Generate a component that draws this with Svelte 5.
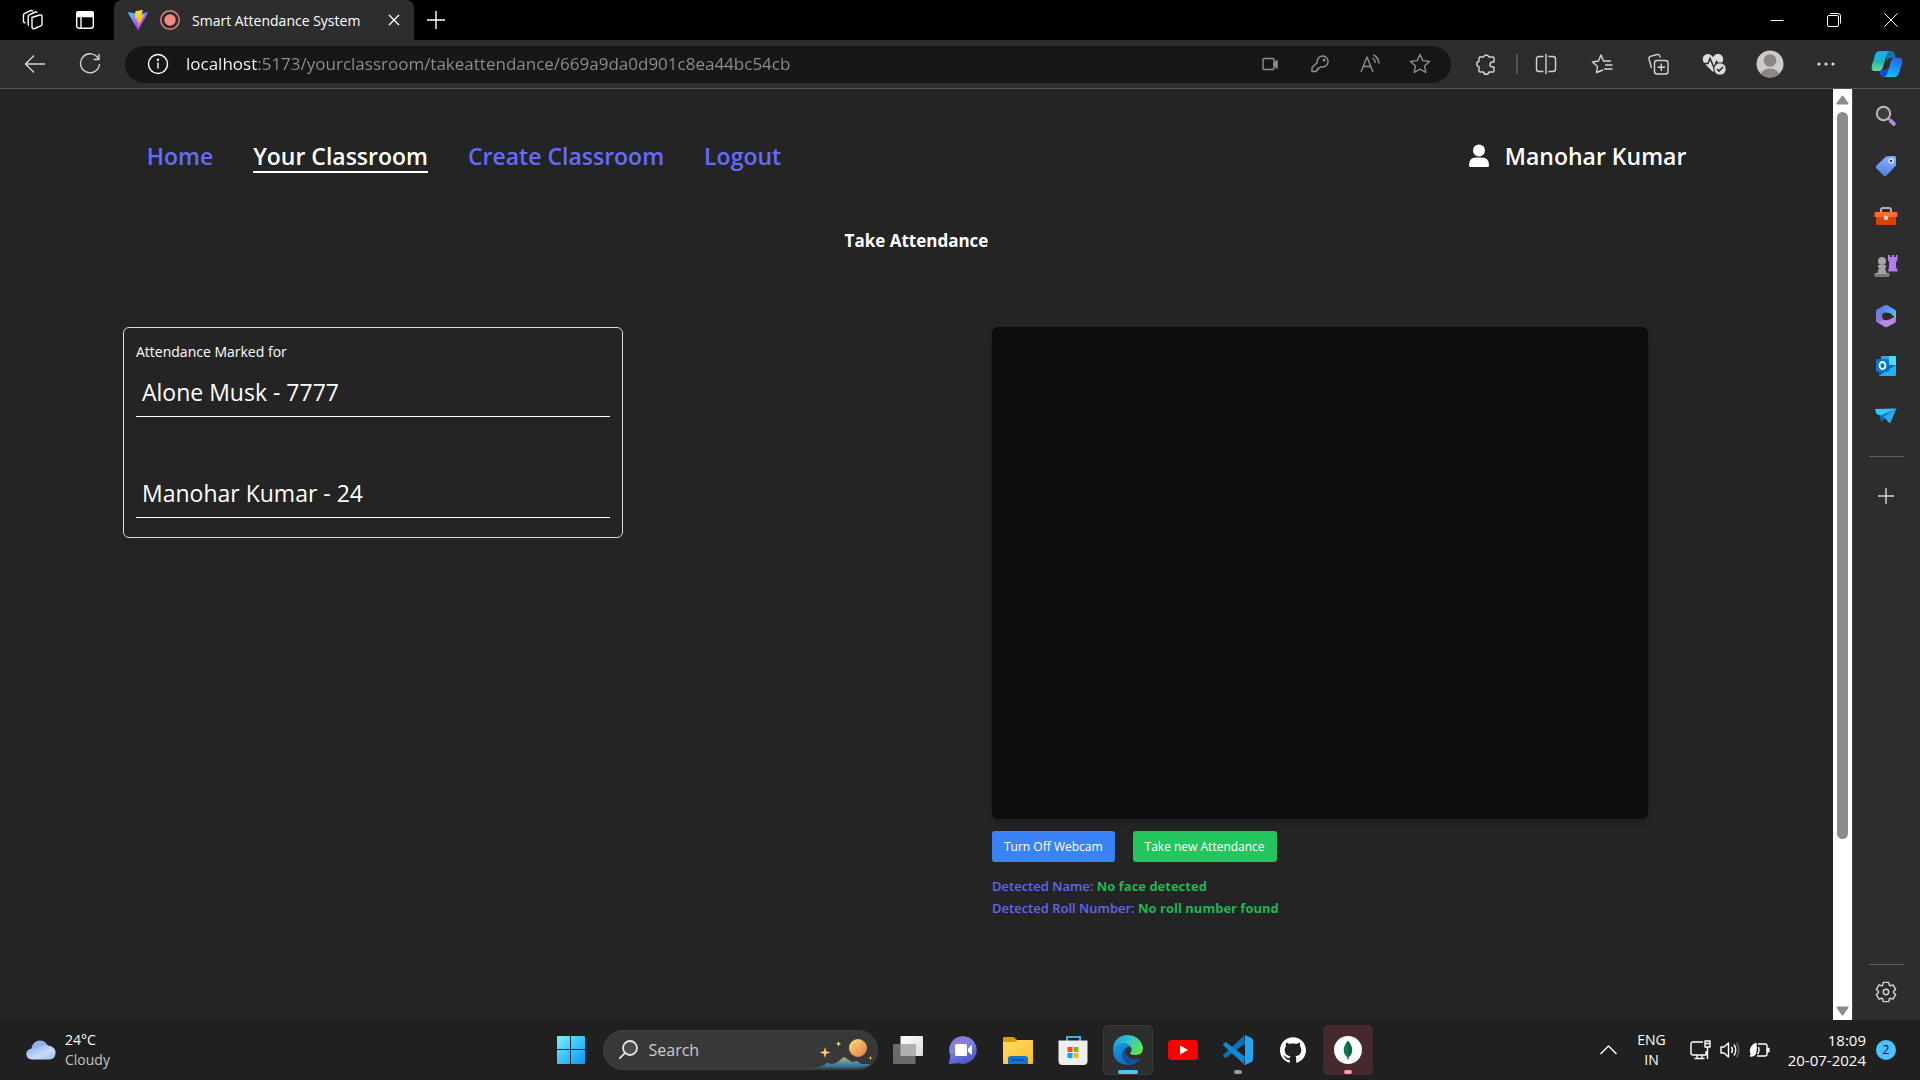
<script>
  const links = [
    { label: 'Home', active: false },
    { label: 'Your Classroom', active: true },
    { label: 'Create Classroom', active: false },
    { label: 'Logout', active: false }
  ];
  const marked = ['Alone Musk - 7777', 'Manohar Kumar - 24'];
  let url = $state('localhost:5173/yourclassroom/takeattendance/669a9da0d901c8ea44bc54cb');

  const gear = Array.from({ length: 6 }, (_, i) => i * 60 - 90)
    .flatMap((a) => [[a - 25, 7.6], [a - 16, 10], [a + 16, 10], [a + 25, 7.6]])
    .map(([a, r]) => {
      const t = (a * Math.PI) / 180;
      return `${(11 + r * Math.cos(t)).toFixed(2)},${(11 + r * Math.sin(t)).toFixed(2)}`;
    })
    .join(' ');
</script>

<div class="screen">
  <header class="tabs">
    <button class="lead" aria-label="Workspaces">
      <svg width="24" height="24" viewBox="0 0 24 24" class="line"><path d="M11 9.5 18.5 7q2-.6 2.500 1.200v7.800q0 1.300-1.300 1.800l-6 2.700q-2.200.7-2.700-1.200zM8 17.500q-.8-.3-.8-1.500V8.200q0-1 1-1.400l6-2.800q1.500-.5 2.200.6M4.500 15q-2-.4-2-1.600V7q0-1.200 1.200-1.700L9.500 2.700q1.500-.5 2.300.5" /></svg>
    </button>
    <button class="lead" aria-label="Tab actions">
      <svg width="20" height="20" viewBox="0 0 20 20" class="line"><rect x="1.700" y="1.700" width="16.600" height="16.600" rx="2.500" /><path d="M2 2h16v4.500H2z" fill="currentColor" /><path d="M6 6v12" /></svg>
    </button>
    <div class="tab">
      <svg width="20" height="20" viewBox="0 0 256 257">
        <defs>
          <linearGradient id="viteA" x1="0" x2=".6" y1="0" y2=".8"><stop offset="0" stop-color="#41d1ff" /><stop offset="1" stop-color="#bd34fe" /></linearGradient>
          <linearGradient id="viteB" x1=".4" x2=".5" y1="0" y2="1"><stop offset="0" stop-color="#ffea83" /><stop offset=".1" stop-color="#ffdd35" /><stop offset="1" stop-color="#ffa800" /></linearGradient>
        </defs>
        <path fill="url(#viteA)" d="M255.153 37.938L134.897 252.976c-2.483 4.440-8.862 4.466-11.382.048L.875 37.958c-2.746-4.814 1.371-10.646 6.827-9.670l120.385 21.517a6.537 6.537 0 0 0 2.322-.004l117.867-21.483c5.438-.991 9.574 4.796 6.877 9.620Z" />
        <path fill="url(#viteB)" d="M185.432.063L96.440 17.501a3.268 3.268 0 0 0-2.634 3.014l-5.474 92.456a3.268 3.268 0 0 0 3.997 3.378l24.777-5.718c2.318-.535 4.413 1.507 3.936 3.838l-7.361 36.047c-.495 2.426 1.782 4.500 4.151 3.780l15.304-4.649c2.372-.720 4.652 1.360 4.150 3.788l-11.698 56.621c-.732 3.542 3.979 5.473 5.943 2.437l1.313-2.028l72.516-144.720c1.215-2.423-.880-5.186-3.540-4.672l-25.505 4.922c-2.396.462-4.435-1.770-3.759-4.114l16.646-57.705c.677-2.350-1.370-4.583-3.769-4.113Z" />
      </svg>
      <svg width="20" height="20" viewBox="0 0 20 20"><circle cx="10" cy="10" r="9.300" fill="none" stroke="#e8857d" stroke-width="1.400" /><circle cx="10" cy="10" r="5.700" fill="#f28b82" /></svg>
      <span class="tab-title">Smart Attendance System</span>
      <button aria-label="Close tab"><svg width="12" height="12" viewBox="0 0 12 12" class="line"><path d="m1 1 10 10M11 1 1 11" /></svg></button>
    </div>
    <button class="new-tab" aria-label="New tab"><svg width="18" height="18" viewBox="0 0 18 18" class="line"><path d="M9 0v18M0 9h18" /></svg></button>
    <div class="window">
      <button aria-label="Minimise"><svg width="14" height="14" viewBox="0 0 14 14" class="thin"><path d="M.5 7.500h13" /></svg></button>
      <button aria-label="Restore"><svg width="14" height="14" viewBox="0 0 14 14" class="thin"><rect x=".5" y="2.500" width="11" height="11" rx="1.500" /><path d="M3 .5h8q2.500 0 2.500 2.500v7.500" /></svg></button>
      <button aria-label="Close"><svg width="14" height="14" viewBox="0 0 14 14" class="thin"><path d="m.5.5 13 13M13.500.5l-13 13" /></svg></button>
    </div>
  </header>

  <div class="toolbar">
    <button class="nav-button" aria-label="Back"><svg width="22" height="20" viewBox="0 0 22 20" class="line soft"><path d="M21 10H1.500M10 1.500 1.500 10l8.500 8.500" /></svg></button>
    <button class="nav-button" aria-label="Refresh"><svg width="22" height="22" viewBox="0 0 22 22" class="line soft"><path d="M19.500 6A9.500 9.500 0 1 0 20.500 11M20 1v5.500h-5.500" /></svg></button>
    <div class="address">
      <button class="info" aria-label="Site information"><svg width="22" height="22" viewBox="0 0 22 22" class="line"><circle cx="11" cy="11" r="9.500" /><path d="M11 9.500v6" /><circle cx="11" cy="6.800" r=".5" fill="currentColor" /></svg></button>
      <input type="text" aria-label="Address" bind:value={url} />
      <button class="action" aria-label="Camera"><svg width="16" height="14" viewBox="0 0 16 14" class="line"><rect x="1" y="1.500" width="11" height="11" rx="1" /><path d="M12 6.500 15 3.500v7.500L12 8z" fill="currentColor" /></svg></button>
      <button class="action" aria-label="Passwords"><svg width="20" height="20" viewBox="0 0 20 20" class="line"><path d="M12.500 2a5.500 5.500 0 1 1-1.700 10.700L9.500 14H8v2H6.500v1.500H2v-3.700l5.300-5.300A5.500 5.500 0 0 1 12.500 2z" /><circle cx="14" cy="6" r=".8" fill="currentColor" /></svg></button>
      <button class="action" aria-label="Read aloud"><svg width="20" height="20" viewBox="0 0 20 20" class="line"><path d="M1 18 7 3l6 15M3.300 12.500h7.400M12.500 4q2.500 1.500 2.700 5M13.500 1q5 2.500 5.500 8.500" /></svg></button>
      <button class="action" aria-label="Add to favourites"><svg width="22" height="22" viewBox="0 0 22 22" class="line"><path d="m11 1.500 2.800 6.100 6.700.8-5 4.500 1.400 6.600-5.900-3.300-5.900 3.300 1.400-6.600-5-4.500 6.700-.8z" /></svg></button>
    </div>
    <button class="extensions" aria-label="Extensions"><svg width="22" height="22" viewBox="0 0 22 22" class="line soft"><path d="M5 4h3.500a2.800 2.800 0 0 1 5.400 0H18q1 0 1 1v4h-1.500a2.500 2.500 0 0 0 0 5H19v4q0 1-1 1h-4a2.800 2.800 0 0 1-5.500 0H5q-1 0-1-1v-4.300a2.800 2.800 0 0 1 0-5.500V5q0-1 1-1z" /></svg></button>
    <span class="divider"></span>
    <button aria-label="Split screen"><svg width="22" height="20" viewBox="0 0 22 20" class="line soft"><path d="M8.500 2.500H4Q1.500 2.500 1.500 5v10Q1.500 17.500 4 17.500h4.500M13.500 2.500H18q2.500 0 2.500 2.500v10q0 2.500-2.500 2.500h-4.500M11 0v20" /></svg></button>
    <button aria-label="Favourites"><svg width="22" height="22" viewBox="0 0 22 22" class="line soft"><path d="M12 17 5.500 19.500 6.500 13.500 1.500 9l6-1L10 2l2.500 6h7.500M14 12h7.500M13 16h8.500" /></svg></button>
    <button aria-label="Collections"><svg width="22" height="22" viewBox="0 0 22 22" class="line soft"><rect x="7.500" y="7.500" width="13.500" height="13.500" rx="2.500" /><path d="M14.250 10.500v7.500M10.500 14.250h7.500M4.500 15 2 6q-.5-2 1.500-2.600L10 1.500q2.200-.5 2.800 1.500l.5 1.500" /></svg></button>
    <button aria-label="Browser essentials">
      <svg width="24" height="22" viewBox="0 0 24 22"><path fill="#dcdcdc" d="M11 4Q14-.2 18 1.200 22.500 3.500 20.500 9L11 19 2 10Q-1 4 3.500 1.500 8-.2 11 4z" /><path d="M0 10.500h6l2-5 4 9 2.500-6 2 3" fill="none" stroke="#2d2d2d" stroke-width="1.500" /><circle cx="18" cy="16" r="6.200" fill="#dcdcdc" stroke="#2d2d2d" /><path d="m15 16 2 2 4-4" fill="none" stroke="#2d2d2d" stroke-width="1.600" /></svg>
    </button>
    <button aria-label="Profile">
      <svg width="28" height="28" viewBox="0 0 28 28"><clipPath id="face"><circle cx="14" cy="14" r="13.500" /></clipPath><g clip-path="url(#face)"><path fill="#cecac6" d="M0 0h28v28H0z" /><circle cx="14" cy="10.500" r="6.300" fill="#8b8683" /><ellipse cx="14" cy="26" rx="9.500" ry="7.500" fill="#8b8683" /></g></svg>
    </button>
    <button aria-label="Settings and more"><svg width="18" height="6" viewBox="0 0 18 6" fill="#dcdcdc"><circle cx="2" cy="3" r="1.600" /><circle cx="9" cy="3" r="1.600" /><circle cx="16" cy="3" r="1.600" /></svg></button>
    <button class="copilot" aria-label="Copilot">
      <svg width="32" height="28" viewBox="0 0 32 28">
        <defs>
          <linearGradient id="copA" x1=".3" x2=".2" y1="0" y2="1"><stop offset="0" stop-color="#0fafff" /><stop offset=".5" stop-color="#1eb6b9" /><stop offset="1" stop-color="#6fdc8c" /></linearGradient>
          <linearGradient id="copB" x1=".6" x2=".3" y1="0" y2="1"><stop offset="0" stop-color="#2764e7" /><stop offset="1" stop-color="#14c1fa" /></linearGradient>
        </defs>
        <path fill="#13739f" d="M14 1h6q3 0 3.800 3l1.200 4h-5q-3 0-4 3z" />
        <path fill="#1b49d4" d="M18 27h-5q-3 0-4-3l-1-4h5q3 0 4-3z" />
        <path fill="url(#copA)" d="M9 1h10q-2.500.5-3.300 3.500L12 17q-1 4-4.500 4H4Q-.5 21 1 15L4 5Q5.200 1 9 1z" />
        <path fill="url(#copB)" d="M23 27H13q2.500-.5 3.300-3.500L20 11q1-3.500 4.500-3.500H28q4.500 0 3 6L28 23q-1.200 4-5 4z" />
      </svg>
    </button>
  </div>

  <div class="body">
    <main class="page">
      <nav>
        {#each links as link}
          <a href="#top" class:active={link.active}>{link.label}</a>
        {/each}
        <span class="user">
          <svg width="20" height="24" viewBox="0 0 20 24" fill="#fff"><circle cx="10" cy="6.500" r="6" /><path d="M0 21.500Q0 13.500 7 13.500h6q7 0 7 8 0 1.500-1.500 1.500h-17Q0 23 0 21.500z" /></svg>
          <span>Manohar Kumar</span>
        </span>
      </nav>
      <h1>Take Attendance</h1>
      <div class="content">
        <section class="card">
          <h2>Attendance Marked for</h2>
          <ul>
            {#each marked as entry}
              <li>{entry}</li>
            {/each}
          </ul>
        </section>
        <section class="camera">
          <div class="video" role="img" aria-label="Webcam feed"></div>
          <div class="buttons">
            <button class="off">Turn Off Webcam</button>
            <button class="take">Take new Attendance</button>
          </div>
          <p>Detected Name: <strong>No face detected</strong></p>
          <p>Detected Roll Number: <strong>No roll number found</strong></p>
        </section>
      </div>
    </main>

    <div class="scrollbar" aria-hidden="true">
      <svg width="13" height="10" viewBox="0 0 13 10"><path d="M6.500 1.500 11.500 8.500h-10z" fill="#8b8b8b" stroke="#8b8b8b" stroke-width="2" stroke-linejoin="round" /></svg>
      <div class="track"><div class="thumb"></div></div>
      <svg width="13" height="10" viewBox="0 0 13 10"><path d="M6.500 8.500 1.500 1.500h10z" fill="#8b8b8b" stroke="#8b8b8b" stroke-width="2" stroke-linejoin="round" /></svg>
    </div>

    <aside>
      <button aria-label="Search sidebar"><svg width="22" height="22" viewBox="0 0 22 22" fill="none"><path d="m13 13 3 3" stroke="#aaa" stroke-width="2" /><circle cx="8.500" cy="8.500" r="6.700" fill="#3d3d3d" stroke="#bdbab7" stroke-width="2" /><path d="m15.800 15.800 3 3" stroke="#b987ea" stroke-width="4" stroke-linecap="round" /></svg></button>
      <button aria-label="Shopping"><svg width="22" height="22" viewBox="0 0 22 22"><defs><linearGradient id="tag" x1=".5" x2=".3" y1="0" y2="1"><stop offset="0" stop-color="#82b1ff" /><stop offset="1" stop-color="#5580dc" /></linearGradient></defs><path fill="url(#tag)" d="m11 1.500 8-.5q2 0 2 2v7.500L11.500 20.500q-1.500 1-3 0L1.500 13.500q-1.500-1.500 0-3z" /><circle cx="16" cy="6" r="2" fill="#263d59" stroke="#dce8f5" stroke-width="1.500" /></svg></button>
      <button aria-label="Tools"><svg width="24" height="20" viewBox="0 0 24 20"><path d="M7 6V4q0-2 2-2h6q2 0 2 2v2" fill="none" stroke="#b4afab" stroke-width="2" /><path fill="#d94308" d="M2 8h20v10q0 1-1 1H3q-1 0-1-1z" /><path fill="#f86d2c" d="M2 6h20q1.500 0 1.500 1.500V10q0 1-1 1h-21q-1 0-1-1V7.500Q.5 6 2 6z" /><circle cx="12" cy="12" r="2.300" fill="#d3cdc9" /></svg></button>
      <button aria-label="Games"><svg width="24" height="24" viewBox="0 0 24 24"><path fill="#b87af0" d="M14 1h2v2h2V1h2v2h2V1h1.500v5L22 8v5l1.500 3v1.500H14l1-4.500V8l-1-2z" /><g fill="#a4a19f"><circle cx="8" cy="7" r="4" /><path d="M4 11h8v2l-1 1 1.500 5H15q1 1 0 4H1q-1-3 0-4h2.500L5 14l-1-1z" /></g><path fill="#7c7977" d="M1 20h14v3H1z" /></svg></button>
      <button aria-label="Microsoft 365"><svg width="22" height="24" viewBox="0 0 22 24"><defs><linearGradient id="msA" x1="0" x2="0" y1="0" y2="1"><stop offset="0" stop-color="#5279e8" /><stop offset="1" stop-color="#9c74d9" /></linearGradient><linearGradient id="msB" x1="0" x2="1" y1="0" y2="1"><stop offset="0" stop-color="#4a7fe0" /><stop offset="1" stop-color="#5ccbf5" /></linearGradient></defs><path fill="url(#msA)" d="M11.500 1 8 8v9l-4 2.500L1 17.500V7Q1 6 2 5.500L9 1.500q1.500-.8 2.500-.5z" /><path fill="#b889dd" d="m21 12-.2 5.500q0 1-1 1.500L12 23q-1 .5-2 0l-6.500-4L8 15.500l6.500 0z" /><path fill="url(#msB)" d="M11 1h1l8 4.800q1 .7 1 1.700v6.500L15 9H7.500V4Q8.500 1.500 11 1z" /><circle cx="11" cy="12.300" r="3.900" fill="#2d2d2d" /></svg></button>
      <button aria-label="Outlook"><svg width="22" height="22" viewBox="0 0 22 22"><path fill="#28a8ea" d="M6 1h14q1 0 1 1v18H6z" /><path fill="#50d9ff" d="M14 1h6q1 0 1 1v8h-7z" /><path fill="#0a64ad" d="M4 10h17L4 21z" /><path fill="#2aabec" d="m21 10-17 11h16q1 0 1-1z" /><rect x="1" y="4" width="13" height="13" rx="1.500" fill="#0078d4" /><ellipse cx="7.500" cy="10.500" rx="3" ry="3.500" fill="none" stroke="#fff" stroke-width="1.800" /></svg></button>
      <button aria-label="Drop"><svg width="24" height="18" viewBox="0 0 24 18"><path fill="#37c6fa" d="M1 2 22.500 1.500 9 9.500 2.500 7z" /><path fill="#096dc1" d="M6 9 22.500 1.500 7 15z" /><path fill="#29a9ec" d="M9.500 9.500 22.500 1.500l-6 14q-.5.800-1.500.3z" /></svg></button>
      <hr />
      <button aria-label="Add to sidebar"><svg width="16" height="16" viewBox="0 0 16 16" class="line soft"><path d="M8 0v16M0 8h16" /></svg></button>
      <hr class="last" />
      <button aria-label="Sidebar settings"><svg width="22" height="22" viewBox="0 0 22 22" class="line soft"><polygon points={gear} /><circle cx="11" cy="11" r="2.700" /></svg></button>
    </aside>
  </div>

  <footer>
    <div class="weather">
      <svg width="30" height="20" viewBox="0 0 30 20"><defs><linearGradient id="cloud" x1="0" x2="1" y1="0" y2="1"><stop offset="0" stop-color="#7da8ec" /><stop offset=".6" stop-color="#c9dcf8" /><stop offset="1" stop-color="#9dbdf2" /></linearGradient></defs><circle cx="14" cy="9" r="8.500" fill="#8fb2ee" /><path fill="url(#cloud)" d="M6 8.500q2.500-.5 5 1Q13 5.500 16 6q3-1.500 6.500-.5 7.500 1.500 7 8-.5 5.500-6 6H6Q.5 19 .2 14 .5 9 6 8.500z" /></svg>
      <div><span>24°C</span><span class="dim">Cloudy</span></div>
    </div>
    <div class="apps">
      <button class="start" aria-label="Start"><svg width="30" height="30" viewBox="0 0 30 30"><defs><linearGradient id="win" x1="0" x2="1" y1="0" y2="1"><stop offset="0" stop-color="#7df2ff" /><stop offset=".5" stop-color="#3ac4fb" /><stop offset="1" stop-color="#1292fc" /></linearGradient></defs><path fill="url(#win)" d="M2 1h12v13H1V2q0-1 1-1zm13 0h13q1 0 1 1v12H15zM1 15h13v14H2q-1 0-1-1zm14 0h14v13q0 1-1 1H15z" /></svg></button>
      <div class="search">
        <svg width="20" height="20" viewBox="0 0 20 20" fill="none" stroke="#e4e4e4" stroke-width="1.800" stroke-linecap="round"><circle cx="12" cy="8" r="7" fill="#4a4a4a" /><path d="m6.800 13.200-5 5" /></svg>
        <input type="text" aria-label="Search" placeholder="Search" />
        <svg width="60" height="38" viewBox="0 0 60 38">
          <defs><linearGradient id="hill" x1="0" x2="0" y1="0" y2="1"><stop offset="0" stop-color="#d6b468" /><stop offset=".35" stop-color="#66a58a" /><stop offset="1" stop-color="#2858a8" /></linearGradient><linearGradient id="moon" x1="0" x2="1" y1="0" y2="1"><stop offset="0" stop-color="#ffe07c" /><stop offset="1" stop-color="#df7648" /></linearGradient></defs>
          <path fill="url(#hill)" d="M0 37q10-1 14-5l5 1 4-1 8-6 8 5 5-1 4 3h10l-8 4z" />
          <circle cx="45" cy="17" r="9" fill="url(#moon)" /><g fill="#eeb052"><circle cx="41" cy="14" r="1.500" /><circle cx="48" cy="13" r="1" /><circle cx="47" cy="20" r="1.500" /></g>
          <path fill="#ffd457" d="m12 16 1.200 4.300 4.300 1.200-4.300 1.200L12 27l-1.200-4.300-4.300-1.200 4.300-1.200zM25.500 10l.8 1.900 1.900.8-1.900.8-.8 1.900-.8-1.900-1.900-.8 1.900-.8zM57.500 25l.5 1.500 1.500.5-1.500.5-.5 1.500-.5-1.500-1.500-.5 1.500-.5z" />
        </svg>
      </div>
      <button aria-label="Task view"><svg width="30" height="28" viewBox="0 0 30 28"><defs><linearGradient id="pane" x1="0" x2="1" y1="0" y2="1"><stop offset="0" stop-color="#fff" /><stop offset="1" stop-color="#dcdcdc" /></linearGradient></defs><rect x="7.500" width="22.500" height="20" rx="1" fill="url(#pane)" /><rect y="8" width="22.500" height="20" rx="1" fill="#6a6a6a" /><path fill="#b0b0b0" d="M7.500 8h15v12h-15z" /></svg></button>
      <button aria-label="Chat"><svg width="30" height="30" viewBox="0 0 30 30"><defs><linearGradient id="chat" x1=".2" x2=".7" y1="0" y2="1"><stop offset="0" stop-color="#a16fb4" /><stop offset=".4" stop-color="#7b83eb" /><stop offset="1" stop-color="#4b53bc" /></linearGradient></defs><path fill="url(#chat)" d="M15 1a14 14 0 1 1-5 27.200L2 29q-1.500 0-1-1.500L2.500 21A14 14 0 0 1 15 1z" /><rect x="7" y="9" width="12" height="12" rx="1.500" fill="#fff" /><path fill="#fff" d="m20 13.500 3-3q1-.5 1 .5v8q0 1-1 .5l-3-3z" /></svg></button>
      <button aria-label="File Explorer"><svg width="30" height="28" viewBox="0 0 30 28"><defs><linearGradient id="folder" x1="0" x2="1" y1="0" y2="1"><stop offset="0" stop-color="#ffda6b" /><stop offset="1" stop-color="#fcbf24" /></linearGradient></defs><path fill="#dd9b06" d="M0 2Q0 1 1 1h9q1 0 2 1l2 2H28q2 0 2 2v6H0z" /><path fill="url(#folder)" d="M0 6h12l3-2h14q1 0 1 1v22q0 1-1 1H1q-1 0-1-1z" /><path fill="#1274ca" d="M5 28v-5q0-3 3-3h14q3 0 3 3v5z" /><path d="M9 24h12" stroke="#0b4d93" stroke-width="1.500" /></svg></button>
      <button aria-label="Microsoft Store"><svg width="30" height="30" viewBox="0 0 30 30"><path d="M9 7V2h13v5" fill="none" stroke="#31b9ee" stroke-width="2" /><path fill="#efefef" d="M.5 5.500h29V26q0 4-4 4H4.500q-4 0-4-4z" /><path fill="#f25022" d="M9.500 12h5v5h-5z" /><path fill="#7fba00" d="M15.500 12h5v5h-5z" /><path fill="#00a4ef" d="M9.500 18h5v5h-5z" /><path fill="#ffb900" d="M15.500 18h5v5h-5z" /></svg></button>
      <button class="tile edge" aria-label="Microsoft Edge">
        <svg width="30" height="30" viewBox="0 0 30 30">
          <defs><linearGradient id="edgeA" x1="0" x2="1" y1=".2" y2=".6"><stop offset="0" stop-color="#1f96dd" /><stop offset=".5" stop-color="#34c6cb" /><stop offset="1" stop-color="#67e348" /></linearGradient><linearGradient id="edgeB" x1="0" x2=".6" y1="0" y2="1"><stop offset="0" stop-color="#1c9de5" /><stop offset="1" stop-color="#0b69bd" /></linearGradient></defs>
          <path fill="url(#edgeB)" d="M0 14.500Q3 7 11 7q7.500 0 9.500 6-3-2.500-6-1-4 3-1.500 8 3.500 6 12 4.500l2-.5Q22 30 15 30 0 29 0 14.500z" />
          <path fill="#12509b" d="M14.500 12Q9 14 9 20q.5 6.500 7.500 9.500 6.500-.5 10.500-5.500.5-1-.5-.8-9 3.300-13-3.200-2-5 1-8z" />
          <path fill="url(#edgeA)" d="M0 14.500Q1 0 15 0q12 .5 15 12 .5 8-8 8-5 0-5-2 2-1.500 1.500-4.500Q16.500 7.500 10 8 3.500 8.500 0 14.500z" />
        </svg>
      </button>
      <button aria-label="YouTube"><svg width="30" height="20" viewBox="0 0 30 20"><rect width="30" height="20" rx="4" fill="#f00" /><path fill="#fff" d="m12 5.500 8 4.500-8 4.500z" /></svg></button>
      <button class="tile code" aria-label="Visual Studio Code"><svg width="30" height="30" viewBox="0 0 30 30"><path fill="#0e70b5" d="M22 8.500 3.500 22.500q-1 .7-1.800 0l-1.200-1.200q-1-.8 0-1.700L21 .8z" /><path fill="#1487cf" d="M22 21.500 3.500 7.500q-1-.7-1.800 0L.5 8.700q-1 .8 0 1.700L21 29.200z" /><path fill="#27a4f2" d="M22 0l6.500 3Q30 3.800 30 5.200v19.600q0 1.400-1.500 2.200L22 30q-1 .3-1.800-.6 1.800 1.200 1.800-1V1.600Q22-.4 20.200.6 21-.3 22 0z" /></svg></button>
      <button aria-label="GitHub"><svg width="26" height="26" viewBox="0 0 24 24" fill="#fff"><path d="M12 .297c-6.630 0-12 5.373-12 12 0 5.303 3.438 9.800 8.205 11.385.6.113.820-.258.820-.577 0-.285-.010-1.040-.015-2.040-3.338.724-4.042-1.610-4.042-1.610C4.422 18.070 3.633 17.700 3.633 17.700c-1.087-.744.084-.729.084-.729 1.205.084 1.838 1.236 1.838 1.236 1.070 1.835 2.809 1.305 3.495.998.108-.776.417-1.305.760-1.605-2.665-.3-5.466-1.332-5.466-5.930 0-1.310.465-2.380 1.235-3.220-.135-.303-.540-1.523.105-3.176 0 0 1.005-.322 3.300 1.230.960-.267 1.980-.399 3-.405 1.020.006 2.040.138 3 .405 2.280-1.552 3.285-1.230 3.285-1.230.645 1.653.240 2.873.120 3.176.765.840 1.230 1.910 1.230 3.220 0 4.610-2.805 5.625-5.475 5.920.420.360.810 1.096.810 2.220 0 1.606-.015 2.896-.015 3.286 0 .315.210.690.825.570C20.565 22.092 24 17.592 24 12.297c0-6.627-5.373-12-12-12" /></svg></button>
      <button class="tile mongo" aria-label="MongoDB Compass"><svg width="28" height="28" viewBox="0 0 28 28"><circle cx="14" cy="14" r="14" fill="#f9fbfa" /><path fill="#116149" d="M14 4.500q4.200 5 4.200 9.500t-3.400 7L14.500 23.500h-1l-.3-2.500Q9.800 18.500 9.800 14T14 4.500z" /><path fill="#13aa52" d="M14 4.500q-4.200 5-4.200 9.500t3.400 7l.8 1z" opacity=".35" /></svg></button>
    </div>
    <div class="tray">
      <button aria-label="Show hidden icons"><svg width="17" height="10" viewBox="0 0 17 10" class="line"><path d="m.5 9 8-8 8 8" /></svg></button>
      <div class="lang"><span>ENG</span><span>IN</span></div>
      <div class="status">
        <svg width="21" height="20" viewBox="0 0 21 20" class="line"><path d="M13 2H3Q1 2 1 4v9q0 2 2 2h13v-4M7 15v3.500M12 15v3.500M4.500 18.500h10M15 1h5v6h-5zM17.500 7v12M15 3.500h5" /></svg>
        <svg width="20" height="18" viewBox="0 0 20 18" class="line"><path d="M1 6h3l4.500-4v14L4 12H1zM11.500 6q2 3 0 6M14 3.500q3.500 5.500 0 11" /><path d="M16.500 1.500q4.500 7.500 0 15" stroke="#666" /></svg>
        <svg width="21" height="16" viewBox="0 0 21 16" class="line"><path d="M9 2h7q2 0 2 2v8q0 2-2 2H8" /><path fill="currentColor" d="M18.500 6.500h1.500v3h-1.500zM7 1.500Q1.500 4 1.500 9q0 2 1.200 3.200L1.500 14q4 0 5-3Q7.500 7 7 1.500z" /><path d="M9.500 5q1.500 4-1 7" /></svg>
      </div>
      <div class="clock"><span>18:09</span><span>20-07-2024</span></div>
      <span class="badge">2</span>
    </div>
  </footer>
</div>

<style>
  :global(body) { margin: 0; background: #242424; }
  .screen {
    display: flex;
    flex-direction: column;
    min-height: 100vh;
    font-family: 'Open Sans', 'Noto Sans', sans-serif;
    color: #fff;
  }
  button {
    display: flex;
    align-items: center;
    justify-content: center;
    flex: none;
    padding: 0;
    border: 0;
    background: none;
    color: inherit;
    font: inherit;
  }
  svg { display: block; flex: none; }
  .line, .thin { fill: none; stroke: currentColor; stroke-width: 1.4; stroke-linejoin: round; }
  .thin { stroke-width: 1; }
  .soft { color: #d4d4d4; }

  .tabs { display: flex; height: 40px; background: #000; }
  .lead { width: 52px; }
  .lead:first-child { margin-left: 7px; }
  .tab {
    display: flex;
    align-items: center;
    gap: 12px;
    box-sizing: border-box;
    width: 300px;
    margin-left: 3px;
    padding: 0 14px;
    border-radius: 8px 8px 0 0;
    background: #2d2d2d;
  }
  .tab-title { flex: 1; font-size: 14px; white-space: nowrap; }
  .new-tab { width: 44px; }
  .window { display: flex; margin-left: auto; padding-right: 1px; }
  .window button { width: 57px; }

  .toolbar {
    display: flex;
    align-items: center;
    height: 48px;
    background: #2d2d2d;
    border-bottom: 1px solid #555;
  }
  .toolbar button { width: 56px; height: 36px; }
  .toolbar .nav-button { width: 55px; }
  .toolbar .nav-button:first-child { margin-left: 7px; }
  .address {
    display: flex;
    align-items: center;
    flex: 1;
    height: 37px;
    margin: 0 10px 0 8px;
    padding: 0 6px 0 5px;
    border-radius: 19px;
    background: #171717;
    color: #8f8f8f;
  }
  .toolbar .info { width: 55px; margin-right: 1px; color: #fff; }
  .address input {
    flex: 1;
    min-width: 0;
    padding: 0;
    border: 0;
    outline: 0;
    font: 17px/24px 'Open Sans', 'Noto Sans', sans-serif;
    color: transparent;
    background: linear-gradient(90deg, #fff 71px, #8f8f8f 71px);
    background-clip: text;
    -webkit-background-clip: text;
  }
  .toolbar .action, .toolbar .extensions { width: 50px; }
  .divider { width: 2px; height: 20px; margin-left: 5px; background: #555; }
  .toolbar .copilot { width: 66px; }

  .body { display: flex; flex: 1; }
  .page { flex: 1; min-width: 0; background: #242424; }
  nav {
    display: flex;
    align-items: center;
    gap: 40px;
    padding: 50px 8% 0;
    font-size: 23px;
    line-height: 30px;
    font-weight: 600;
    white-space: nowrap;
  }
  nav a { padding-top: 2px; color: #646cff; text-decoration: none; border-bottom: 2px solid transparent; }
  nav .active { color: #fff; border-color: #fff; }
  .user { display: flex; align-items: center; gap: 16px; margin-left: auto; }
  h1 { margin: 55px 0 74px; text-align: center; font-size: 17px; line-height: 25px; font-weight: 700; }
  .content { display: flex; align-items: flex-start; justify-content: space-between; padding: 0 185px 0 123px; }
  .card { flex: 0 1 500px; box-sizing: border-box; padding: 12px 12px 19px; border: 1px solid #dcdcdc; border-radius: 6px; }
  .card h2 { margin: 0; font-size: 14px; line-height: 24px; font-weight: 400; }
  ul { display: grid; gap: 48px; margin: 0; padding: 0; list-style: none; }
  li { padding: 12px 6px 8px; border-bottom: 1px solid #fff; font-size: 23px; line-height: 32px; }
  .camera { flex: 0 1 656px; }
  .video { aspect-ratio: 4 / 3; border-radius: 6px; background: #0e0c0e; box-shadow: 0 4px 8px #0002; }
  .buttons { display: flex; gap: 18px; margin: 12px 0 13px; }
  .buttons button { height: 31px; padding: 0 12px; border-radius: 3px; font-size: 12px; font-weight: 500; }
  .off { background: #3b82f6; }
  .take { background: #22c55e; }
  p { margin: 0; font-size: 13px; line-height: 22px; font-weight: 600; color: #6366f1; }
  strong { font-weight: 700; color: #22b455; }

  .scrollbar {
    display: flex;
    flex-direction: column;
    align-items: center;
    gap: 7px;
    box-sizing: border-box;
    width: 19px;
    padding: 6px 0 4px;
    background: #fff;
  }
  .track { flex: 1; width: 11px; }
  .thumb { height: 82%; border-radius: 6px; background: #8b8b8b; }
  aside {
    display: flex;
    flex-direction: column;
    align-items: center;
    box-sizing: border-box;
    width: 68px;
    padding: 2px 1px 3px 0;
    border-left: 1px solid #444;
    background: #2d2d2d;
  }
  aside button { width: 50px; height: 50px; }
  hr { width: 35px; margin: 15px 0 14px; border: 0; border-top: 1px solid #5c5c5c; }
  .last { margin: auto 0 2px; }

  footer {
    display: grid;
    grid-template-columns: 1fr auto 1fr;
    align-items: center;
    height: 60px;
    background: #202020;
    font-size: 14px;
    line-height: 20px;
  }
  footer span { display: block; }
  .weather { display: flex; align-items: center; gap: 9px; padding-left: 26px; }
  .dim { color: #c4c4c4; }
  .apps { display: flex; align-items: center; gap: 5px; padding-right: 2px; }
  .apps button { width: 50px; height: 50px; }
  .search {
    display: flex;
    align-items: center;
    box-sizing: border-box;
    width: 275px;
    height: 40px;
    margin-left: 2px;
    padding: 0 4px 0 14px;
    border: 1px solid #414141;
    border-radius: 20px;
    background: #383838;
  }
  .search input {
    flex: 1;
    min-width: 0;
    padding: 0 0 0 11px;
    border: 0;
    outline: 0;
    background: none;
    color: #ccc;
    font: 16px/24px 'Open Sans', 'Noto Sans', sans-serif;
  }
  .search input::placeholder { color: #ccc; }
  .tile { position: relative; border-radius: 5px; }
  .tile::after { content: ''; position: absolute; bottom: 1px; width: 8px; height: 4px; border-radius: 2px; background: #999; }
  .edge { background: #2e2e2e; box-shadow: inset 0 0 0 1px #383838; }
  .edge::after { width: 20px; background: #4cc2ff; }
  .mongo { background: #46292b; }
  .mongo::after { background: #ff99a4; }
  .tray { display: flex; align-items: center; justify-content: flex-end; padding-right: 24px; }
  .lang { margin: 0 24px 0 20px; text-align: center; }
  .status { display: flex; align-items: center; gap: 9px; }
  .clock { margin: 0 10px 0 18px; text-align: right; font-size: 15px; }
  .badge { width: 20px; height: 20px; border-radius: 50%; background: #4cc2ff; color: #111; font-size: 12px; text-align: center; }
</style>
